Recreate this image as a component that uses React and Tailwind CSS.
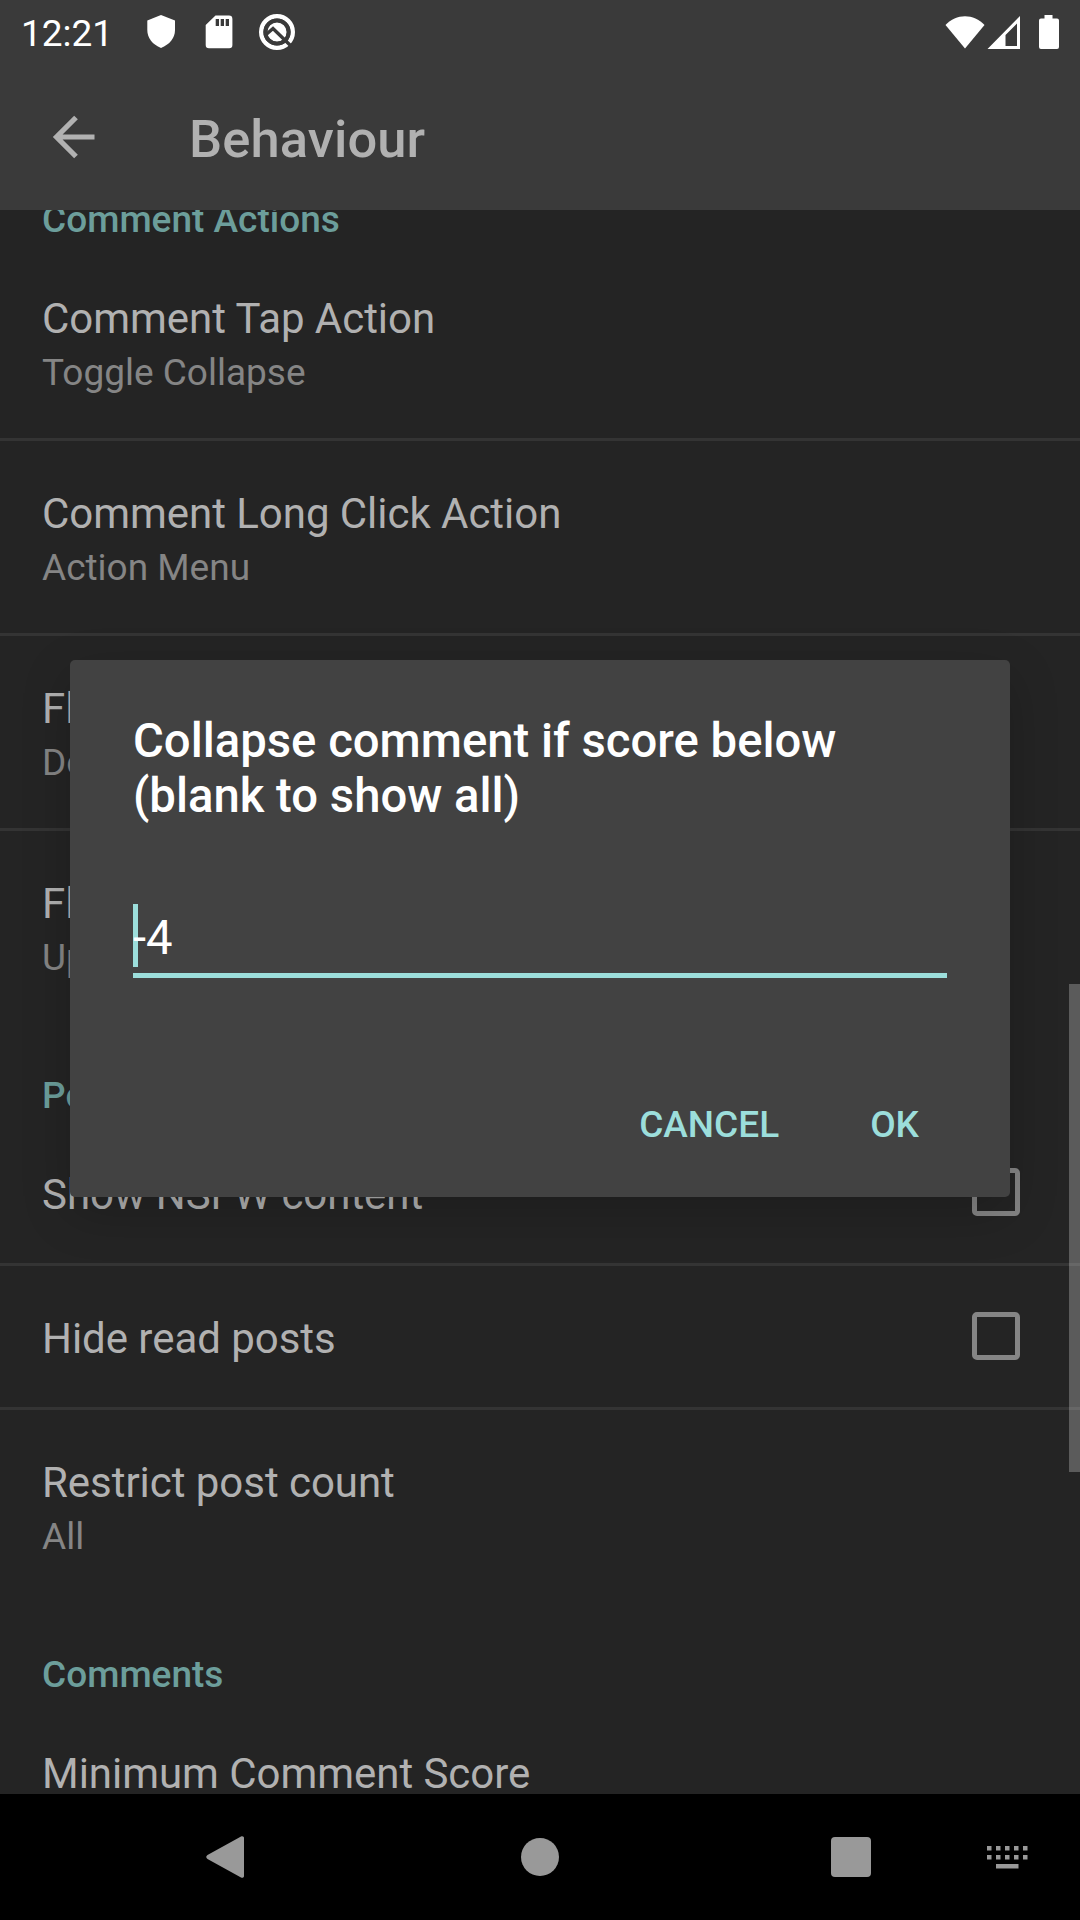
const TITLE = "text-[42px] leading-[56px] tracking-[-0.04px] text-[#b1b1b1]";

function Category({ children }) {
  return (
    <h2 className="h-[99px] pt-[48px] px-[42px] text-[37px] leading-[50px] font-medium text-[#6c9e9b]">
      {children}
    </h2>
  );
}

function Preference({ title, summary, checkbox, last }) {
  return (
    <div className={last ? "" : "border-b-[3px] border-[#343434]"}>
      <div className={`flex justify-between pl-[42px] pr-[60px] ${summary ? "h-[192px]" : "h-[141px]"}`}>
        <div className="pt-[45px]">
          <div className={TITLE}>{title}</div>
          {summary && <div className="mt-px text-[37px] leading-[50px] text-[#858585]">{summary}</div>}
        </div>
        {checkbox && <div className="mt-[46px] size-[48px] rounded-[5px] border-[5.5px] border-[#858585]" />}
      </div>
    </div>
  );
}

function StatusBar() {
  return (
    <div className="flex h-[63px] items-center text-white">
      <span className="ml-[21px] w-[123px] text-[37px] leading-[44px] mt-[4px]">12:21</span>
      <svg className="-mt-px" width="36" height="36" viewBox="0 0 36 36" fill="currentColor">
        <path d="M17 2 31 7.500V17c0 8-5.500 14.500-14 18C8.500 31.500 3.300 25 3.300 17V7.500Z" />
      </svg>
      <svg className="ml-[23px]" width="32" height="36" viewBox="0 0 32 36">
        <path d="M12.500 1.500H26a3.400 3.400 0 0 1 3.400 3.400V31a3.300 3.300 0 0 1-3.400 3.300H6A3.300 3.300 0 0 1 2.700 31V11Z" fill="#fff" />
        <path d="M12.700 5h3.300v7h-3.300zM17.700 5H21v7h-3.300zM22.700 5H26v7h-3.300z" fill="#3a3a3a" />
      </svg>
      <svg className="ml-[21px]" width="42" height="42" viewBox="0 0 42 42" fill="none">
        <circle cx="21" cy="21" r="15.800" stroke="#fff" strokeWidth="4.400" />
        <circle cx="21" cy="21" r="10" fill="#fff" />
        <path d="m9.500 24 7.500-6.500 18.500 18" stroke="#3a3a3a" strokeWidth="3.400" />
        <circle cx="21" cy="21" r="11.600" stroke="#3a3a3a" strokeWidth="4" />
      </svg>
      <div className="ml-auto flex items-center">
        <svg width="40" height="36" viewBox="0 0 40 36" fill="currentColor">
          <path d="M.5 11C11-.7 29-.7 39.500 11L20 34.500Z" />
        </svg>
        <svg className="ml-[2px]" width="34" height="36" viewBox="0 0 34 36" fill="currentColor">
          <path fillRule="evenodd" d="M33 2v33H.5ZM30 9.500 18.500 21v11H30Z" />
        </svg>
        <svg className="ml-[17px] mr-[21px]" width="21" height="36" viewBox="0 0 21 36" fill="currentColor">
          <path d="M6.500 1h8v3.500H19a2 2 0 0 1 2 2V33a2 2 0 0 1-2 2H3a2 2 0 0 1-2-2V6.500a2 2 0 0 1 2-2h3.500Z" />
        </svg>
      </div>
    </div>
  );
}

function Dialog() {
  return (
    <div className="absolute left-[70px] top-[660px] flex h-[537px] w-[940px] flex-col rounded-[5px] bg-[#424242] px-[63px] shadow-[0_16px_50px_rgba(0,0,0,0.2)]">
      <h3 className="mt-[54px] text-[47.250px] leading-[55px] font-medium text-white">
        Collapse comment if score below
        <br />
        (blank to show all)
      </h3>
      <div className="relative mt-[80px] h-[74px] border-b-[5px] border-[#9cdedb]">
        <span className="absolute left-0 top-0 h-[63px] w-[5px] bg-[#9cdedb]" />
        <span className="relative block text-[47.250px] leading-[68px] text-white">-4</span>
      </div>
      <div className="mt-[116px] flex justify-end gap-[91px] pr-[28px] text-[37px] leading-[62px] text-[#9cdedb]">
        <button className="font-medium">CANCEL</button>
        <button className="font-medium">OK</button>
      </div>
    </div>
  );
}

function NavBar() {
  return (
    <nav className="grid h-[126px] grid-cols-[450px_180px_442px_8px] items-center bg-black text-[#999]">
      <svg className="ml-[205px]" width="42" height="44" viewBox="0 0 42 44" fill="currentColor">
        <path d="M2.500 20 36 1.500c1.500-.8 3 0 3 1.500v38c0 1.500-1.500 2.300-3 1.500L2.500 24c-1.700-1-1.700-3 0-4Z" />
      </svg>
      <div className="size-[38px] justify-self-center rounded-full bg-[#999]" />
      <div className="flex items-center">
        <div className="ml-[201px] size-[40px] rounded-[4px] bg-[#999]" />
        <svg className="ml-[116px]" width="42" height="26" viewBox="0 0 42 26" fill="currentColor">
          {[0, 9, 18, 27, 36].map((x) => (
            <path key={x} d={`M${x} 2h4.500v4.500h-4.500zM${x} 11h4.500v4.500h-4.500z`} />
          ))}
          <path d="M9 20h22.500v4.500H9z" />
        </svg>
      </div>
    </nav>
  );
}

export default function App() {
  return (
    <div className="relative flex h-[1920px] w-[1080px] flex-col overflow-hidden bg-[#242424] font-['Roboto',sans-serif]">
      <header className="h-[210px] shrink-0 bg-[#3a3a3a]">
        <StatusBar />
        <div className="flex h-[147px] items-center">
          <svg className="ml-[52px]" width="44" height="44" viewBox="0 0 44 44" fill="none" stroke="#b1b1b1" strokeWidth="5.200">
            <path d="M24 2.500 4.500 22 24 41.500M4 22h38.500" />
          </svg>
          <h1 className="ml-[93px] mt-[4px] text-[52.500px] leading-[62px] font-medium tracking-[0.1px] text-[#b1b1b1]">
            Behaviour
          </h1>
        </div>
      </header>
      <main className="min-h-0 flex-1 overflow-hidden">
        <div className="-mt-[63px]">
          <Category>Comment Actions</Category>
          <Preference title="Comment Tap Action" summary="Toggle Collapse" />
          <Preference title="Comment Long Click Action" summary="Action Menu" />
          <Preference title="Fling Left Action" summary="Downvote" />
          <Preference title="Fling Right Action" summary="Upvote" last />
          <Category>Posts</Category>
          <Preference title="Show NSFW content" checkbox />
          <Preference title="Hide read posts" checkbox />
          <Preference title="Restrict post count" summary="All" last />
          <Category>Comments</Category>
          <Preference title="Minimum Comment Score" />
        </div>
      </main>
      <NavBar />
      <div className="absolute right-0 top-[984px] h-[488px] w-[11px] bg-white/25" />
      <Dialog />
    </div>
  );
}
